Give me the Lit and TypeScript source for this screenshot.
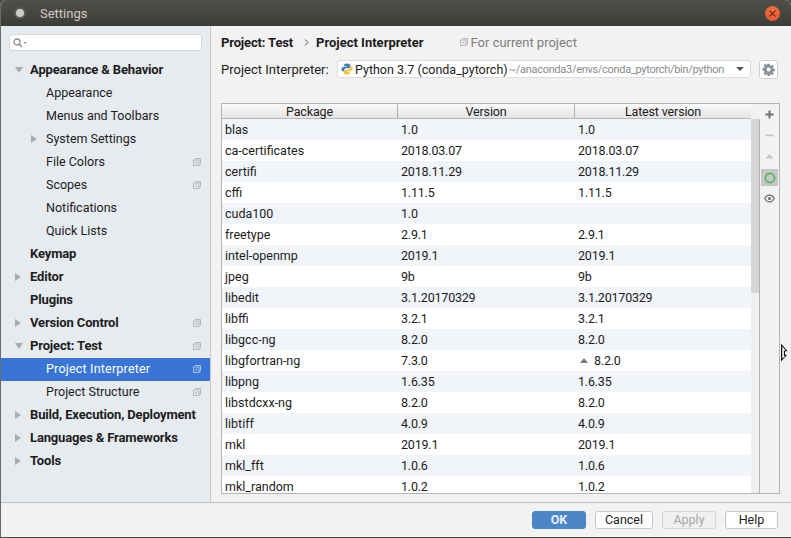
import { LitElement, html, css, svg, TemplateResult } from 'lit';
import { customElement } from 'lit/decorators.js';

interface NavItem {
  label: string;
  level: 0 | 1;
  arrow?: 'open' | 'closed';
  scoped?: boolean;
  selected?: boolean;
}

const NAV: NavItem[] = [
  { label: 'Appearance & Behavior', level: 0, arrow: 'open' },
  { label: 'Appearance', level: 1 },
  { label: 'Menus and Toolbars', level: 1 },
  { label: 'System Settings', level: 1, arrow: 'closed' },
  { label: 'File Colors', level: 1, scoped: true },
  { label: 'Scopes', level: 1, scoped: true },
  { label: 'Notifications', level: 1 },
  { label: 'Quick Lists', level: 1 },
  { label: 'Keymap', level: 0 },
  { label: 'Editor', level: 0, arrow: 'closed' },
  { label: 'Plugins', level: 0 },
  { label: 'Version Control', level: 0, arrow: 'closed', scoped: true },
  { label: 'Project: Test', level: 0, arrow: 'open', scoped: true },
  { label: 'Project Interpreter', level: 1, scoped: true, selected: true },
  { label: 'Project Structure', level: 1, scoped: true },
  { label: 'Build, Execution, Deployment', level: 0, arrow: 'closed' },
  { label: 'Languages & Frameworks', level: 0, arrow: 'closed' },
  { label: 'Tools', level: 0, arrow: 'closed' },
];

const PACKAGES: [string, string, string][] = [
  ['blas', '1.0', '1.0'],
  ['ca-certificates', '2018.03.07', '2018.03.07'],
  ['certifi', '2018.11.29', '2018.11.29'],
  ['cffi', '1.11.5', '1.11.5'],
  ['cuda100', '1.0', ''],
  ['freetype', '2.9.1', '2.9.1'],
  ['intel-openmp', '2019.1', '2019.1'],
  ['jpeg', '9b', '9b'],
  ['libedit', '3.1.20170329', '3.1.20170329'],
  ['libffi', '3.2.1', '3.2.1'],
  ['libgcc-ng', '8.2.0', '8.2.0'],
  ['libgfortran-ng', '7.3.0', '^8.2.0'],
  ['libpng', '1.6.35', '1.6.35'],
  ['libstdcxx-ng', '8.2.0', '8.2.0'],
  ['libtiff', '4.0.9', '4.0.9'],
  ['mkl', '2019.1', '2019.1'],
  ['mkl_fft', '1.0.6', '1.0.6'],
  ['mkl_random', '1.0.2', '1.0.2'],
];

const scopeIcon = svg`<svg width="8" height="8" viewBox="0 0 8 8" fill="none" stroke="currentColor">
  <path d="M2 .5h5.500v5.500h-1.500"/><rect x=".5" y="2" width="5.500" height="5.500"/><rect x="2" y="3.500" width="2.500" height="2.500" fill="currentColor" stroke="none" opacity=".6"/></svg>`;

@customElement('app-root')
export class AppRoot extends LitElement {
  renderNav(item: NavItem): TemplateResult {
    const cls = `row l${item.level}${item.selected ? ' sel' : ''}`;
    return html`
      <div class=${cls}>
        ${item.arrow
          ? html`<span class="arrow ${item.arrow} ${item.level ? 'in' : ''}"></span>`
          : ''}
        <span class="name">${item.label}</span>
        ${item.scoped ? html`<span class="scope">${scopeIcon}</span>` : ''}
      </div>
    `;
  }

  renderLatest(v: string): TemplateResult {
    if (v.startsWith('^')) {
      return html`<span class="up"></span>${v.slice(1)}`;
    }
    return html`${v}`;
  }

  render(): TemplateResult {
    return html`
      <div class="window">
        <header class="titlebar">
          <span class="menu-dot"></span>
          <span class="title">Settings</span>
          <span class="close">
            <svg width="7" height="7" viewBox="0 0 7 7" stroke="#7a2a10" stroke-width="1.100">
              <path d="M.5 .5l6 6M6.500 .5l-6 6" />
            </svg>
          </span>
        </header>
        <div class="body">
          <aside class="side">
            <div class="search">
              <svg width="14" height="10" viewBox="0 0 14 10" fill="none" stroke="#8a8a8a" stroke-width="1.300">
                <circle cx="4" cy="4" r="3" /><path d="M6.200 6.200l2.800 2.800" />
                <path d="M10.500 4h3l-1.500 2z" fill="#8a8a8a" stroke="none" />
              </svg>
            </div>
            <nav class="tree">${NAV.map((n) => this.renderNav(n))}</nav>
          </aside>
          <main class="main">
            <div class="crumbs">
              <b>Project: Test</b>
              <svg class="chev" width="5" height="7" viewBox="0 0 5 7" fill="none" stroke="#555" stroke-width="1">
                <path d="M1 .5l3 3-3 3" />
              </svg>
              <b>Project Interpreter</b>
              <span class="for"><span class="scope">${scopeIcon}</span>For current project</span>
            </div>
            <div class="interp">
              <span class="lbl">Project Interpreter:</span>
              <div class="combo">
                <svg class="py-logo" width="12" height="12" viewBox="0 0 13 13">
                  <path d="M6.400 .5c-2.400 0-3 1-3 2v1.200h3.200v.5H2.300C1 4.200.4 5.300.4 6.600s.6 2.500 1.900 2.500h1.100V7.700c0-1.100 1-2 2.100-2h2.900c1 0 1.700-.8 1.700-1.700V2.500c0-1.100-1.100-2-3.700-2z" fill="#3d7fb8" />
                  <path d="M6.600 12.500c2.400 0 3-1 3-2V9.300H6.400v-.5h4.300c1.300 0 1.900-1.100 1.900-2.400s-.6-2.500-1.900-2.500H9.600v1.400c0 1.100-1 2-2.100 2H4.600c-1 0-1.700.8-1.700 1.700v1.500c0 1.100 1.100 2 3.700 2z" fill="#f2c63c" />
                </svg>
                <span class="py">Python 3.7 (conda_pytorch)</span>
                <span class="path">~/anaconda3/envs/conda_pytorch/bin/python</span>
                <span class="caret"></span>
              </div>
              <button class="gear" aria-label="Settings">
                <svg width="13" height="13" viewBox="0 0 13 13">
                  <path d="M5.400 .8h2.200l.3 1.700 1.100.5 1.400-1 1.500 1.500-1 1.400.5 1.100 1.700.3v2.200l-1.700.3-.5 1.100 1 1.400-1.500 1.500-1.400-1-1.100.5-.3 1.700H5.400l-.3-1.700-1.100-.5-1.400 1-1.500-1.500 1-1.400-.5-1.100L-.1 7.500V5.300l1.700-.3.5-1.100-1-1.400L2.600 1l1.400 1 1.100-.5z" fill="#8b9298" transform="translate(.5 -.1) scale(.96)" />
                  <circle cx="6.700" cy="6.400" r="2" fill="#fff" />
                </svg>
              </button>
            </div>
            <section class="panel">
              <div class="table">
                <div class="thead">
                  <span>Package</span><span>Version</span><span>Latest version</span>
                </div>
                <div class="rows-wrap">
                  <div class="rows">
                    ${PACKAGES.map(
                      (p) => html`<div class="tr">
                        <span>${p[0]}</span><span>${p[1]}</span><span>${this.renderLatest(p[2])}</span>
                      </div>`,
                    )}
                  </div>
                  <div class="track"><div class="thumb"></div></div>
                </div>
              </div>
              <div class="tools">
                <span class="tool">
                  <svg width="9" height="9" viewBox="0 0 9 9" fill="#6e6e6e"><path d="M3.500 .5h2v3h3v2h-3v3h-2v-3h-3v-2h3z" /></svg>
                </span>
                <span class="tool">
                  <svg width="9" height="9" viewBox="0 0 9 9" fill="#c4c4c4"><path d="M.5 3.500h8v1.700h-8z" /></svg>
                </span>
                <span class="tool">
                  <svg width="9" height="9" viewBox="0 0 9 9" fill="#c4c4c4"><path d="M4.500 2l4 4.500h-8z" /></svg>
                </span>
                <span class="tool on">
                  <svg width="12" height="12" viewBox="0 0 12 12" fill="none" stroke="#4cb45a" stroke-width="1.600"><circle cx="6" cy="6" r="4.600" /></svg>
                </span>
                <span class="tool">
                  <svg width="11" height="9" viewBox="0 0 12 10" fill="none" stroke="#6e6e6e" stroke-width="1.300">
                    <path d="M.7 5c1.300-2.500 3.200-3.700 5.300-3.700S10 2.500 11.300 5C10 7.500 8.100 8.700 6 8.700S2 7.500 .7 5z" />
                    <circle cx="6" cy="5" r="1.700" fill="#6e6e6e" stroke="none" />
                  </svg>
                </span>
              </div>
            </section>
          </main>
        </div>
        <footer class="foot">
          <button class="btn ok">OK</button>
          <button class="btn cancel">Cancel</button>
          <button class="btn apply" disabled>Apply</button>
          <button class="btn help">Help</button>
        </footer>
      </div>
      <svg class="cursor" width="9" height="19" viewBox="0 0 9 19">
        <path d="M1 .5l6.500 7.500-2.500.5v3l2 .5L1 18.500z" fill="#111" />
        <path d="M2.200 3.500l3.500 3.800-1.800.4v5l1.200.4-2.900 2.700z" fill="#f4f4f4" />
      </svg>
    `;
  }

  static styles = css`
    :host {
      display: block;
      position: relative;
      width: 791px;
      height: 538px;
      overflow: hidden;
      background: #4a4a46;
      font-family: Roboto, sans-serif;
      font-size: 13px;
      color: #1c1c1c;
    }
    .window {
      display: flex;
      flex-direction: column;
      width: 791px;
      height: 537px;
      box-sizing: border-box;
      border-left: 1px solid #6b6a66;
      background: #f2f2f2;
      border-radius: 6px 6px 0 0;
      overflow: hidden;
    }
    .titlebar {
      flex: none;
      height: 26px;
      display: flex;
      align-items: center;
      padding: 0 11px 0 15px;
      background: linear-gradient(#504f4a, #3d3c37);
      color: #cfcbc2;
      font-size: 13px;
    }
    .menu-dot {
      width: 8px;
      height: 8px;
      border-radius: 50%;
      background: #d0cec8;
      box-shadow: 0 0 0 2px #5a5954;
      margin-right: 16px;
    }
    .title {
      flex: 1;
    }
    .close {
      width: 15px;
      height: 15px;
      border-radius: 50%;
      display: flex;
      align-items: center;
      justify-content: center;
      background: radial-gradient(circle at 50% 35%, #f2764a, #df4f20);
    }
    .body {
      flex: 1;
      min-height: 0;
      display: flex;
    }
    .side {
      flex: none;
      width: 209px;
      background: #e6ebf0;
      border-right: 1px solid #c4c8cc;
      border-bottom: 1px solid #bfc0c0;
      padding-top: 8px;
    }
    .search {
      height: 15px;
      margin: 0 8px;
      padding: 0 0 0 3px;
      display: flex;
      align-items: center;
      background: #fff;
      border: 1px solid #d5d9dd;
      border-radius: 3px;
    }
    .tree {
      margin-top: 8px;
    }
    .row {
      position: relative;
      height: 23px;
      box-sizing: border-box;
      display: flex;
      align-items: center;
      padding-right: 9px;
      padding-bottom: 2px;
    }
    .row.l0 {
      padding-left: 29px;
      font-weight: 700;
      letter-spacing: -0.15px;
    }
    .row.l1 {
      padding-left: 45px;
      font-size: 12.5px;
    }
    .row .name {
      flex: 1;
      white-space: nowrap;
    }
    .row.sel {
      background: #3875d7;
      color: #fff;
      letter-spacing: 0.2px;
    }
    .row.sel .scope {
      color: #a9c2ea;
    }
    .arrow {
      position: absolute;
      left: 14px;
      top: 7px;
      width: 0;
      height: 0;
    }
    .arrow.in {
      left: 30px;
    }
    .arrow.closed {
      border-left: 6px solid #a9adb1;
      border-top: 4px solid transparent;
      border-bottom: 4px solid transparent;
    }
    .arrow.open {
      top: 8px;
      border-top: 6px solid #a9adb1;
      border-left: 4px solid transparent;
      border-right: 4px solid transparent;
    }
    .scope {
      display: inline-flex;
      color: #b4b9bd;
    }
    .main {
      flex: 1;
      min-width: 0;
      display: flex;
      flex-direction: column;
      padding: 8px 11px 8px 10px;
      border-bottom: 1px solid #bfc0c0;
    }
    .crumbs {
      height: 16px;
      display: flex;
      align-items: center;
      white-space: nowrap;
    }
    .crumbs b:first-child {
      letter-spacing: -0.15px;
    }
    .chev {
      margin: 0 7px 0 11px;
    }
    .for {
      display: inline-flex;
      align-items: center;
      gap: 3px;
      margin-left: 36px;
      color: #7d7d7d;
    }
    .interp {
      display: flex;
      align-items: center;
      margin-top: 9px;
      height: 20px;
      white-space: nowrap;
    }
    .lbl {
      width: 116px;
      flex: none;
    }
    .combo {
      flex: none;
      width: 414px;
      height: 18px;
      box-sizing: border-box;
      display: flex;
      align-items: center;
      padding: 0 3px;
      background: #fff;
      border: 1px solid #dcdcdc;
      border-radius: 3px;
      overflow: hidden;
    }
    .py-logo {
      flex: none;
    }
    .py {
      margin-left: 2px;
      font-size: 12.5px;
    }
    .path {
      margin-left: 1px;
      flex: 1;
      min-width: 0;
      color: #8a8a8a;
      font-size: 11px;
      letter-spacing: -0.3px;
    }
    .caret {
      flex: none;
      border-top: 4px solid #555;
      border-left: 4px solid transparent;
      border-right: 4px solid transparent;
      margin-right: 3px;
    }
    .gear {
      width: 19px;
      height: 19px;
      margin-left: 8px;
      padding: 0;
      display: flex;
      align-items: center;
      justify-content: center;
      background: #fff;
      border: 1px solid #cfcfcf;
      border-radius: 3px;
    }
    .panel {
      flex: 1;
      min-height: 0;
      display: flex;
      margin-top: 24px;
      border: 1px solid #b4b4b4;
      background: #f2f2f2;
    }
    .table {
      width: 538px;
      flex: none;
      display: flex;
      flex-direction: column;
      min-height: 0;
    }
    .thead {
      flex: none;
      height: 15px;
      box-sizing: border-box;
      display: grid;
      grid-template-columns: 175px 177px 177px;
      width: 529px;
      background: linear-gradient(#fafafa, #e4e4e4);
      border-bottom: 1px solid #b8b8b8;
      font-size: 12.5px;
      letter-spacing: -0.15px;
      line-height: 15px;
      text-align: center;
    }
    .thead span + span {
      border-left: 1px solid #b0b0b0;
    }
    .rows-wrap {
      flex: 1;
      min-height: 0;
      display: flex;
      overflow: hidden;
    }
    .rows {
      flex: none;
      width: 529px;
      background: #fff;
      overflow: hidden;
    }
    .tr {
      height: 21px;
      display: grid;
      grid-template-columns: 175px 177px 177px;
      align-items: center;
      font-size: 12.5px;
      letter-spacing: -0.2px;
      white-space: nowrap;
    }
    .tr:nth-child(odd) {
      background: #f1f4f9;
    }
    .tr span {
      padding-left: 4px;
    }
    .tr span:first-child {
      padding-left: 3px;
      letter-spacing: 0;
    }
    .up {
      display: inline-block;
      width: 0;
      height: 0;
      padding: 0 !important;
      margin: 0 6px 2px 2px;
      border-bottom: 5px solid #7d7d7d;
      border-left: 4px solid transparent;
      border-right: 4px solid transparent;
    }
    .track {
      flex: 1;
      background: #f0f0f0;
      border-right: 1px solid #b4b4b4;
    }
    .thumb {
      width: 8px;
      height: 174px;
      background: #d6d6d6;
    }
    .tools {
      flex: 1;
      display: flex;
      flex-direction: column;
      align-items: center;
      padding-top: 2px;
      gap: 4px;
    }
    .tool {
      width: 17px;
      height: 17px;
      display: flex;
      align-items: center;
      justify-content: center;
    }
    .tool.on {
      background: #c6c6c6;
    }
    .foot {
      flex: none;
      height: 34px;
      display: flex;
      align-items: center;
      justify-content: flex-end;
      gap: 9px;
      padding-right: 13px;
      background: #f2f2f2;
      box-sizing: border-box;
    }
    .btn {
      height: 18px;
      padding: 0;
      box-sizing: border-box;
      font-family: inherit;
      font-size: 12.5px;
      line-height: 16px;
      border: 1px solid #c6c6c6;
      border-radius: 3px;
      background: #fff;
      color: #222;
    }
    .ok {
      width: 54px;
      background: #4a86c8;
      border-color: #4a86c8;
      color: #e8edf3;
      font-weight: 700;
    }
    .cancel {
      width: 58px;
    }
    .apply {
      width: 54px;
      background: #f0f0f0;
      border-color: #d4d4d4;
      color: #a8a8a8;
    }
    .help {
      width: 53px;
    }
    .cursor {
      position: absolute;
      left: 780px;
      top: 343px;
    }
  `;
}
